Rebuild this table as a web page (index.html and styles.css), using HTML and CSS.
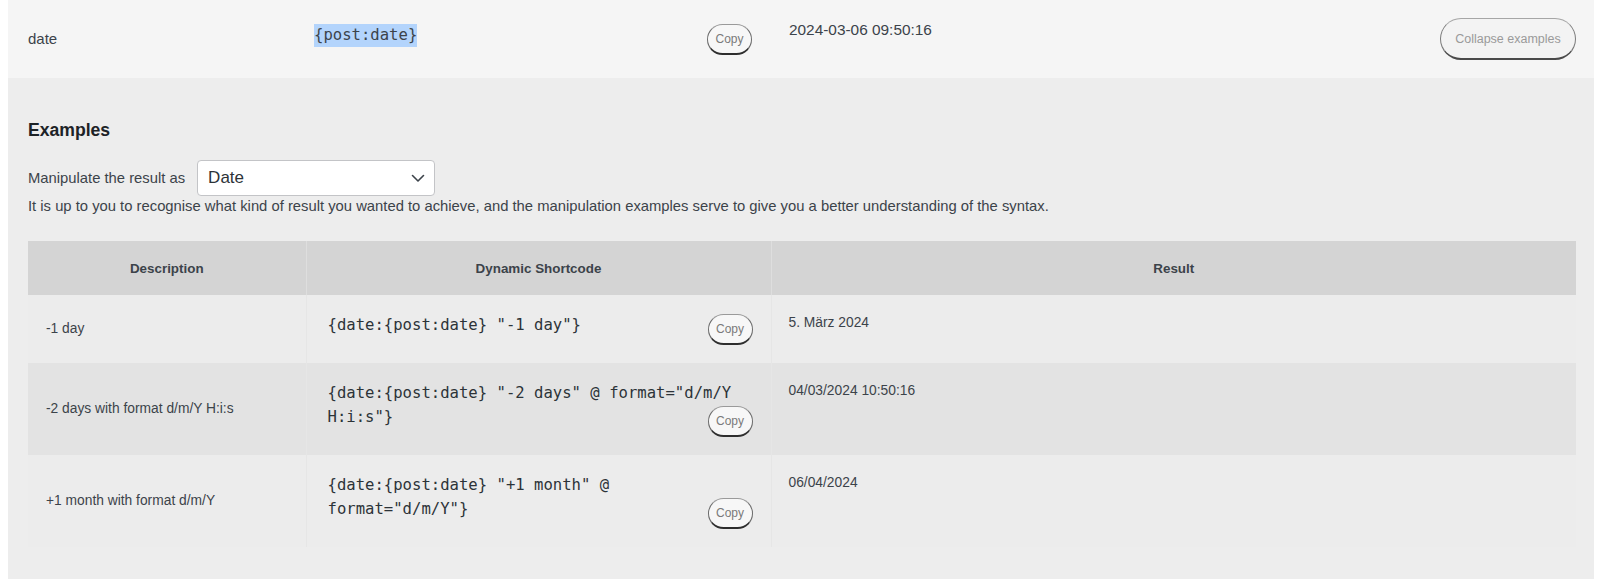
FILE: index.html
```html
<!DOCTYPE html>
<html lang="en">
<head>
<meta charset="utf-8">
<title>Dynamic shortcode examples</title>
<link rel="stylesheet" href="styles.css">
</head>
<body>
<div class="panel">
  <div class="field-row">
    <div class="field-name">date</div>
    <div class="field-code"><code class="hl">{post:date}</code></div>
    <button class="copy-btn" type="button">Copy</button>
    <div class="field-value">2024-03-06 09:50:16</div>
    <button class="collapse-btn" type="button">Collapse examples</button>
  </div>

  <div class="examples">
    <h2 class="ex-title">Examples</h2>
    <div class="manip">
      <span class="manip-label">Manipulate the result as</span>
      <div class="select">
        <span>Date</span>
        <svg class="chev" width="14" height="9" viewBox="0 0 14 9" aria-hidden="true"><path d="M1.5 1.5 L7 7 L12.5 1.5" fill="none" stroke="#3c434a" stroke-width="1.6" stroke-linecap="round" stroke-linejoin="round"/></svg>
      </div>
    </div>
    <p class="hint">It is up to you to recognise what kind of result you wanted to achieve, and the manipulation examples serve to give you a better understanding of the syntax.</p>

    <table class="ex-table">
      <colgroup>
        <col class="c-desc">
        <col class="c-code">
        <col class="c-res">
      </colgroup>
      <thead>
        <tr>
          <th>Description</th>
          <th>Dynamic Shortcode</th>
          <th>Result</th>
        </tr>
      </thead>
      <tbody>
        <tr class="r-odd">
          <td class="desc">-1 day</td>
          <td class="code-cell"><code>{date:{post:date} "-1 day"}</code><button class="copy-btn fl" type="button">Copy</button></td>
          <td class="res">5. März 2024</td>
        </tr>
        <tr class="r-even">
          <td class="desc">-2 days with format d/m/Y H:i:s</td>
          <td class="code-cell"><code>{date:{post:date} "-2 days" @ format="d/m/Y H:i:s"}</code><button class="copy-btn fl" type="button">Copy</button></td>
          <td class="res">04/03/2024 10:50:16</td>
        </tr>
        <tr class="r-odd">
          <td class="desc">+1 month with format d/m/Y</td>
          <td class="code-cell"><code>{date:{post:date} "+1 month" @ format="d/m/Y"}</code><button class="copy-btn fl" type="button">Copy</button></td>
          <td class="res">06/04/2024</td>
        </tr>
      </tbody>
    </table>
  </div>
</div>
</body>
</html>
```

FILE: styles.css
```css
* { box-sizing: border-box; }

html, body { background: #ffffff; }

body {
  margin: 0 6px 0 8px;
  font-family: "Liberation Sans", Arial, sans-serif;
  font-size: 15px;
  color: #3c434a;
}

.panel {
  min-height: 579px;
  background: #ededed;
}

/* top field row */
.field-row {
  display: flex;
  align-items: center;
  height: 78px;
  padding: 0 18px 0 20px;
  background: #f5f5f5;
}

.field-name {
  width: 286px;
  flex: none;
  font-size: 15px;
  line-height: 20px;
}

.field-code {
  width: 393px;
  flex: none;
  align-self: flex-start;
  margin-top: 24px;
}

.hl {
  display: inline-block;
  font-family: "DejaVu Sans Mono", "Liberation Mono", monospace;
  font-size: 15.6px;
  line-height: 23px;
  color: #3c434a;
  background: #b3d4fc;
}

.field-row .copy-btn {
  align-self: flex-start;
  margin-top: 24px;
}

.field-value {
  flex: 1;
  align-self: flex-start;
  margin: 20px 0 0 37px;
  font-size: 15.4px;
  line-height: 20px;
  color: #3c434a;
}

/* buttons */
.copy-btn {
  width: 45px;
  height: 31px;
  padding: 0;
  border: 1.5px solid #6b6b6b;
  border-top-color: #9a9a9a;
  border-bottom: 2.5px solid #2e2e2e;
  border-radius: 16px;
  background: #f7f7f7;
  font-family: "Liberation Sans", Arial, sans-serif;
  font-size: 12px;
  color: #7a7a7a;
  cursor: pointer;
}

.collapse-btn {
  flex: none;
  width: 136px;
  height: 42px;
  padding: 0;
  border: 1.5px solid #7a7a7a;
  border-top-color: #a6a6a6;
  border-bottom: 2.5px solid #4a4a4a;
  border-radius: 21px;
  background: #f3f3f3;
  font-family: "Liberation Sans", Arial, sans-serif;
  font-size: 12.5px;
  color: #9a9a9a;
  cursor: pointer;
}

/* examples */
.examples {
  padding: 40px 18px 20px 20px;
}

.ex-title {
  margin: 0;
  font-size: 17.6px;
  line-height: 24px;
  font-weight: 700;
  color: #1d2327;
}

.manip {
  display: flex;
  align-items: center;
  gap: 12px;
  margin-top: 18px;
}

.manip-label {
  font-size: 14.8px;
  line-height: 18px;
}

.select {
  display: flex;
  align-items: center;
  justify-content: space-between;
  width: 238px;
  height: 36px;
  padding: 0 9px 0 10px;
  background: #ffffff;
  border: 1px solid #c3c4c7;
  border-radius: 4px;
  font-size: 17px;
  color: #2c3338;
}

.hint {
  margin: 1px 0 0;
  font-size: 14.8px;
  line-height: 18px;
}

/* table */
.ex-table {
  width: 100%;
  margin-top: 26px;
  border-collapse: collapse;
  table-layout: fixed;
}

.c-desc { width: 278px; }
.c-code { width: 465px; }

.ex-table th {
  height: 54px;
  padding: 0 10px;
  background: #d4d4d4;
  font-size: 13.4px;
  font-weight: 700;
  color: #3c434a;
  text-align: center;
  vertical-align: middle;
}

.ex-table th + th,
.ex-table td + td {
  border-left: 1px solid #e6e6e6;
}

.ex-table th + th {
  border-left-color: #dedede;
}

.r-odd { background: #ececec; }
.r-even { background: #e3e3e3; }

.ex-table td {
  font-size: 13.8px;
  line-height: 20px;
  color: #3c434a;
}

.desc {
  padding: 0 18px;
  vertical-align: middle;
}

.code-cell {
  padding: 18px 18px 18px 21px;
  vertical-align: top;
}

.code-cell code {
  font-family: "DejaVu Sans Mono", "Liberation Mono", monospace;
  font-size: 15.6px;
  line-height: 24px;
  color: #2c3338;
}

.copy-btn.fl {
  float: right;
  margin-top: 1px;
}

.res {
  padding: 18px 17px;
  vertical-align: top;
  font-size: 13.8px;
}
```
